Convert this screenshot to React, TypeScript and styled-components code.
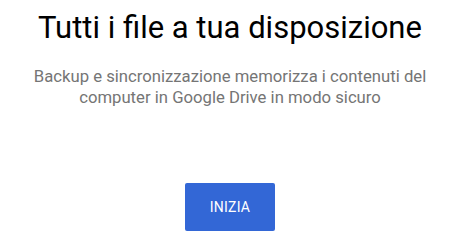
import React from "react";
import styled, { createGlobalStyle } from "styled-components";

const Global = createGlobalStyle`
  html, body { margin: 0; padding: 0; background: #fff; }
  body { font-family: Roboto, "Noto Sans", Arial, sans-serif; }
`;

const Page = styled.div`
  width: 460px;
  height: 248px;
  display: flex;
  flex-direction: column;
  align-items: center;
  box-sizing: border-box;
  padding-top: 10px;
`;

const Title = styled.h1`
  margin: 0;
  font-family: Roboto, sans-serif;
  font-weight: 400;
  font-size: 31px;
  line-height: 36px;
  color: #000;
  text-align: center;
  white-space: nowrap;
`;

const Subtitle = styled.p`
  margin: 20px 0 0;
  font-family: Roboto, sans-serif;
  font-size: 16.7px;
  line-height: 21px;
  color: #757575;
  text-align: center;
  width: 440px;
`;

const Button = styled.button`
  margin-top: 75px;
  width: 90px;
  height: 48px;
  border: none;
  border-radius: 2px;
  background: #3367d6;
  color: #fff;
  font-family: Roboto, sans-serif;
  font-size: 14px;
  letter-spacing: 0.2px;
  cursor: pointer;
`;

export default function App() {
  return (
    <>
      <Global />
      <Page>
        <Title>Tutti i file a tua disposizione</Title>
        <Subtitle>
          Backup e sincronizzazione memorizza i contenuti del computer in Google Drive in modo sicuro
        </Subtitle>
        <Button>INIZIA</Button>
      </Page>
    </>
  );
}
